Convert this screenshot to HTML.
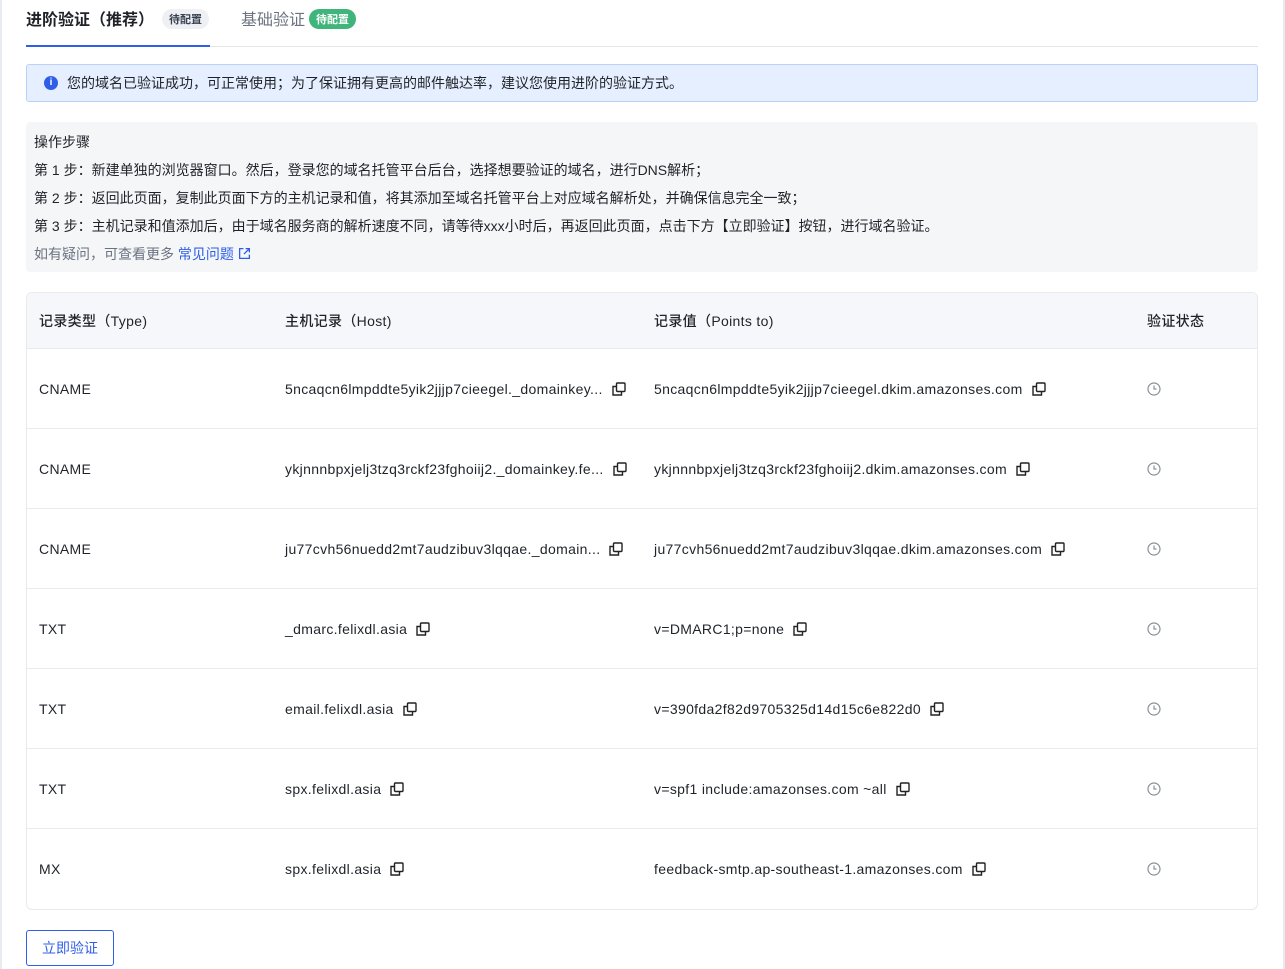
<!DOCTYPE html>
<html><head><meta charset="utf-8"><style>
*{box-sizing:border-box;margin:0;padding:0}
body{width:1285px;height:969px;background:#fff;font-family:"Liberation Sans","Noto Sans CJK SC",sans-serif;font-size:14px;color:#1f2329;position:relative;overflow:hidden}
.edge{position:absolute;top:0;bottom:0;width:2px;background:#e8ebef}
.tabs{position:absolute;left:26px;top:0;width:1232px;height:47px;border-bottom:1px solid #e5e7eb}
.tab1{position:absolute;left:0;top:6px;font-size:16px;font-weight:bold;color:#1f2329}
.tab2{position:absolute;left:215px;top:6px;font-size:16px;color:#6b7280}
.badge{display:inline-block;font-size:11px;font-weight:bold;padding:2px 7px;border-radius:10px;vertical-align:2px;margin-left:8px}
.ul{position:absolute;left:0;top:45px;width:184px;height:2px;background:#2f5fe8}
.alert{position:absolute;left:26px;top:64px;width:1232px;height:38px;background:#e6efff;border:1px solid #bcd1f7;border-radius:3px;font-size:14px;padding-left:40px;line-height:36px}
.alert i{position:absolute;left:17px;top:11px;width:14px;height:14px;border-radius:50%;background:#2f5fe8;color:#fff;font-style:normal;font-size:10px;font-weight:bold;line-height:14px;text-align:center}
.steps{position:absolute;left:26px;top:122px;width:1232px;height:150px;background:#f5f6f8;border-radius:4px;padding:6px 8px;font-size:14px;line-height:28px}
.steps .g{color:#6b7280}
.steps a{color:#2f5fe8;text-decoration:none}
.tbl{position:absolute;left:26px;top:292px;width:1232px;height:618px;border:1px solid #e8eaee;border-radius:6px;overflow:hidden}
.hd{height:56px;background:#f5f7fa;border-bottom:1px solid #e8eaee;position:relative}
.hd .c{font-weight:500}
.row{height:80px;border-bottom:1px solid #e8eaee;position:relative}
.row:last-child{border-bottom:none}
.c{position:absolute;top:50%;transform:translateY(-50%);white-space:nowrap;font-size:14px;letter-spacing:0.33px}
.c1{left:12px}.c2{left:258px}.c3{left:627px}.c4{left:1120px}
.cp{display:inline-block;width:14px;height:14px;vertical-align:-2px;margin-left:9px}
.btn{position:absolute;left:26px;top:930px;width:88px;height:36px;border:1px solid #2f5fe8;border-radius:3px;color:#2f5fe8;text-align:center;line-height:34px;font-size:14px}
</style></head><body>
<div class="edge" style="left:0"></div><div class="edge" style="right:0"></div>
<div class="tabs">
<div class="tab1">进阶验证（推荐）<span class="badge" style="background:#eef0f4;color:#374151">待配置</span></div>
<div class="tab2">基础验证<span class="badge" style="background:#3fb47b;color:#fff;margin-left:4px">待配置</span></div>
<div class="ul"></div>
</div>
<div class="alert"><i>i</i>您的域名已验证成功，可正常使用；为了保证拥有更高的邮件触达率，建议您使用进阶的验证方式。</div>
<div class="steps">
<div>操作步骤</div>
<div>第 1 步：新建单独的浏览器窗口。然后，登录您的域名托管平台后台，选择想要验证的域名，进行DNS解析；</div>
<div>第 2 步：返回此页面，复制此页面下方的主机记录和值，将其添加至域名托管平台上对应域名解析处，并确保信息完全一致；</div>
<div>第 3 步：主机记录和值添加后，由于域名服务商的解析速度不同，请等待xxx小时后，再返回此页面，点击下方【立即验证】按钮，进行域名验证。</div>
<div class="g">如有疑问，可查看更多 <a>常见问题 <svg width="13" height="13" viewBox="0 0 12 12" style="vertical-align:-1px" fill="none" stroke="#2f5fe8" stroke-width="1.2"><path d="M5 1.5H1.5v9h9V7M7 1.5h3.5V5M10.5 1.5L5.5 6.5"/></svg></a></div>
</div>
<svg width="0" height="0" style="position:absolute"><defs><symbol id="cp" viewBox="0 0 14 14"><g fill="none" stroke="#222" stroke-width="1.4"><rect x="4.5" y="1" width="8.5" height="8.5" rx="1"/><path d="M4.5 4.5H1v8.5h8.5V9.5"/></g></symbol><symbol id="ck" viewBox="0 0 14 14"><g fill="none" stroke="#8a909a" stroke-width="1.2"><circle cx="7" cy="7" r="6"/><path d="M7 3.5V7h2.5"/></g></symbol></defs></svg>
<div class="tbl">
<div class="hd"><div class="c c1">记录类型（Type)</div><div class="c c2">主机记录（Host)</div><div class="c c3">记录值（Points to)</div><div class="c c4">验证状态</div></div>
<div class="row"><div class="c c1">CNAME</div><div class="c c2">5ncaqcn6lmpddte5yik2jjjp7cieegel._domainkey...<svg class="cp"><use href="#cp"/></svg></div><div class="c c3">5ncaqcn6lmpddte5yik2jjjp7cieegel.dkim.amazonses.com<svg class="cp"><use href="#cp"/></svg></div><div class="c c4"><svg width="14" height="14" style="display:block"><use href="#ck"/></svg></div></div>
<div class="row"><div class="c c1">CNAME</div><div class="c c2">ykjnnnbpxjelj3tzq3rckf23fghoiij2._domainkey.fe...<svg class="cp"><use href="#cp"/></svg></div><div class="c c3">ykjnnnbpxjelj3tzq3rckf23fghoiij2.dkim.amazonses.com<svg class="cp"><use href="#cp"/></svg></div><div class="c c4"><svg width="14" height="14" style="display:block"><use href="#ck"/></svg></div></div>
<div class="row"><div class="c c1">CNAME</div><div class="c c2">ju77cvh56nuedd2mt7audzibuv3lqqae._domain...<svg class="cp"><use href="#cp"/></svg></div><div class="c c3">ju77cvh56nuedd2mt7audzibuv3lqqae.dkim.amazonses.com<svg class="cp"><use href="#cp"/></svg></div><div class="c c4"><svg width="14" height="14" style="display:block"><use href="#ck"/></svg></div></div>
<div class="row"><div class="c c1">TXT</div><div class="c c2">_dmarc.felixdl.asia<svg class="cp"><use href="#cp"/></svg></div><div class="c c3">v=DMARC1;p=none<svg class="cp"><use href="#cp"/></svg></div><div class="c c4"><svg width="14" height="14" style="display:block"><use href="#ck"/></svg></div></div>
<div class="row"><div class="c c1">TXT</div><div class="c c2">email.felixdl.asia<svg class="cp"><use href="#cp"/></svg></div><div class="c c3">v=390fda2f82d9705325d14d15c6e822d0<svg class="cp"><use href="#cp"/></svg></div><div class="c c4"><svg width="14" height="14" style="display:block"><use href="#ck"/></svg></div></div>
<div class="row"><div class="c c1">TXT</div><div class="c c2">spx.felixdl.asia<svg class="cp"><use href="#cp"/></svg></div><div class="c c3">v=spf1 include:amazonses.com ~all<svg class="cp"><use href="#cp"/></svg></div><div class="c c4"><svg width="14" height="14" style="display:block"><use href="#ck"/></svg></div></div>
<div class="row"><div class="c c1">MX</div><div class="c c2">spx.felixdl.asia<svg class="cp"><use href="#cp"/></svg></div><div class="c c3">feedback-smtp.ap-southeast-1.amazonses.com<svg class="cp"><use href="#cp"/></svg></div><div class="c c4"><svg width="14" height="14" style="display:block"><use href="#ck"/></svg></div></div>
</div>
<div class="btn">立即验证</div>
</body></html>
